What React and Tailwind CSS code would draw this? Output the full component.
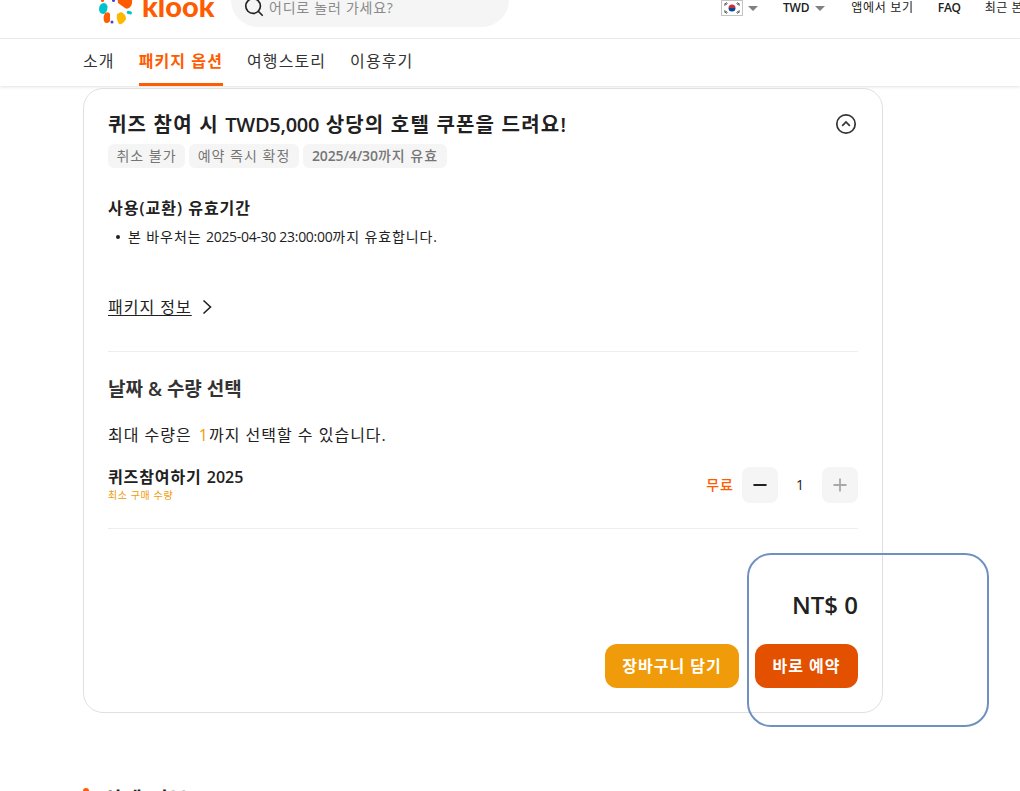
import React from "react";
import { Search, Minus, Plus } from "lucide-react";

const tabs = ["소개", "패키지 옵션", "여행스토리", "이용후기"];

// Klook pinwheel mark
const KlookMark = () => (
  <svg width="34" height="25" viewBox="0 0 34 25" className="shrink-0">
    <path d="M21 -8 L30 -8 Q35 0 32 6 Q29 10 26 8 L19 3 Q18 -2 21 -8 Z" fill="#ff5b00" />
    <path d="M3 3.5 Q7 2 8.5 6 Q9 11 5 14 Q0 14 0 9 Q0 5 3 3.5 Z" fill="#00c4cc" />
    <path d="M6 13 Q10 11 11 14 L11 21 Q9 24 6 22.5 Q3 19 6 13 Z" fill="#ff5b00" />
    <path d="M18 14 L22 12 Q27 14 27 19 Q24 25 20 24 Q17 19 18 14 Z" fill="#ffb800" />
    <rect x="28" y="11" width="5" height="3" rx="1" fill="#00c4cc" transform="rotate(15 30 12)" />
    <circle cx="13" cy="22" r="1.5" fill="#4b3fd6" />
    <circle cx="14.5" cy="0.5" r="1.5" fill="#4b3fd6" />
    <circle cx="3.5" cy="0.5" r="1.5" fill="#ff5b00" />
  </svg>
);

const KoreaFlag = () => (
  <svg width="22" height="16" viewBox="0 0 22 16" className="shrink-0">
    <rect x="0.5" y="0.5" width="21" height="15" fill="#fff" stroke="#c4c4c4" />
    <path d="M7.5 8 A3.5 3.5 0 0 1 14.5 8 Z" fill="#cd2e3a" />
    <path d="M7.5 8 A3.5 3.5 0 0 0 14.5 8 Z" fill="#0047a0" />
    <path d="M3 4.5 L6 2.5 M3.5 5.5 L6.5 3.5 M16 2.5 L19 4.5 M15.5 3.5 L18.5 5.5 M3 11.5 L6 13.5 M3.5 10.5 L6.5 12.5 M16 13.5 L19 11.5 M15.5 12.5 L18.5 10.5" stroke="#333" strokeWidth="0.8" />
  </svg>
);

const Caret = () => (
  <span className="block mt-[6px] w-0 h-0 border-x-[5px] border-x-transparent border-t-[5px] border-t-[#808080]" />
);

export default function App() {
  return (
    <div className="relative h-[791px] overflow-hidden bg-white text-[#212121] font-['Open_Sans','Noto_Sans_CJK_KR',sans-serif]">
      <header className="h-[39px] overflow-hidden border-b border-[#eeeeee] flex">
        <div className="ml-[99px] flex items-start gap-[9px] h-6 w-[123px] shrink-0">
          <KlookMark />
          <span className="-mt-[5px] font-['Lato',sans-serif] font-black text-[29px] leading-[22px] text-[#ff5b00]">klook</span>
        </div>
        <div className="ml-[9px] -mt-[27px] w-[278px] h-[54px] shrink-0 rounded-[27px] bg-[#f5f5f5] flex items-end pb-[10px] pl-[12px] gap-[4px]">
          <Search size={22} strokeWidth={1.8} className="text-[#212121] -mb-[1px]" />
          <span className="text-sm leading-[18px] tracking-[0.75px] text-[#8a8a8a]">어디로 놀러 가세요?</span>
        </div>
        <div className="ml-[212px] flex items-start gap-[5px]">
          <KoreaFlag />
          <Caret />
        </div>
        <div className="ml-[25px] flex items-start text-xs leading-[15px] font-semibold tracking-[-0.2px] gap-[6px]">
          <span>TWD</span>
          <Caret />
        </div>
        <span className="ml-[26px] text-xs leading-[15px] tracking-[0.7px] whitespace-nowrap">앱에서 보기</span>
        <span className="ml-[24px] text-xs leading-[15px] font-semibold tracking-[-0.3px]">FAQ</span>
        <span className="ml-[24px] text-xs leading-[15px] tracking-[0.5px] whitespace-nowrap">최근 본 상품</span>
      </header>

      <nav className="h-[47px] flex items-stretch pl-[83px] gap-6 shadow-[0_1px_3px_rgba(0,0,0,0.12)] text-base tracking-[1.1px]">
        {tabs.map((t, i) => (
          <span
            key={t}
            className={
              i === 1
                ? "flex items-center h-[47px] border-b-[3px] border-[#ff5b00] text-[#ff5b00] font-semibold"
                : "flex items-center h-[47px] pb-[3px] text-[#333333]"
            }
          >
            {t}
          </span>
        ))}
      </nav>

      <main className="ml-[83px] mt-[2px] w-[800px] h-[625px] rounded-[20px] border border-[#e0e0e0] px-6 pt-[22px] flex flex-col">
        <div className="flex justify-between items-start">
          <h2 className="text-xl leading-[28px] font-semibold tracking-[1.2px]">
            퀴즈 참여 시 <span className="tracking-[-0.25px]">TWD5,000</span> 상당의 호텔 쿠폰을 드려요!
          </h2>
          <svg width="22" height="22" viewBox="0 0 22 22" className="mt-[2px] mr-[1px] text-[#333333]" fill="none" stroke="currentColor">
            <circle cx="11" cy="11" r="9.2" strokeWidth="1.7" />
            <path d="M7.2 12.8 L11 9 L14.8 12.8" strokeWidth="1.7" />
          </svg>
        </div>

        <div className="flex gap-1 mt-[5px] text-sm leading-6 tracking-[1px] text-[#757575] text-center whitespace-nowrap">
          <span className="w-[77px] h-6 rounded-md bg-[#f5f5f5]">취소 불가</span>
          <span className="w-[110px] h-6 rounded-md bg-[#f5f5f5]">예약 즉시 확정</span>
          <span className="w-[144px] h-6 rounded-md bg-[#f5f5f5] font-medium">
            <span className="font-semibold tracking-[-0.1px]">2025/4/30</span>까지 유효
          </span>
        </div>

        <h3 className="mt-[28px] text-base leading-6 font-semibold tracking-[1px]">사용(교환) 유효기간</h3>
        <div className="mt-[8px] flex items-center text-sm leading-[18px] tracking-[0.9px] whitespace-pre">
          <span className="ml-[8px] mr-[8px] w-1 h-1 rounded-full bg-[#212121]" />
          본 바우처는 <span className="tracking-[-0.3px]">2025-04-30 23:00:00</span>까지 유효합니다.
        </div>

        <div className="mt-[49px] flex items-center gap-[10px] text-base leading-6 tracking-[1px]">
          <span className="underline underline-offset-2">패키지 정보</span>
          <svg width="11" height="16" viewBox="0 0 11 16" fill="none" stroke="#212121" strokeWidth="1.6">
            <path d="M1.5 1.5 L8.5 8 L1.5 14.5" />
          </svg>
        </div>

        <div className="mt-[32px] border-t border-[#eeeeee]" />

        <h3 className="mt-[23px] text-[19px] leading-[28px] font-semibold text-[#333333]">날짜 &amp; 수량 선택</h3>

        <p className="mt-[20px] text-base leading-6 tracking-[1px]">
          최대 수량은<span className="ml-[7px] text-[#f09b0a]">1</span>까지 선택할 수 있습니다.
        </p>

        <div className="mt-[20px] flex justify-between items-center h-9">
          <div className="-mt-[2px]">
            <div className="text-base leading-[22px] font-semibold tracking-[0.9px]">
              퀴즈참여하기 <span className="tracking-normal">2025</span>
            </div>
            <div className="text-[10px] leading-[14px] tracking-[0.6px] text-[#f09b0a]">최소 구매 수량</div>
          </div>
          <div className="flex items-center">
            <span className="text-sm font-medium tracking-[1px] text-[#ff5b00]">무료</span>
            <button className="ml-[8px] w-9 h-9 rounded-lg bg-[#f5f5f5] flex items-center justify-center">
              <Minus size={20} strokeWidth={2.4} className="text-[#212121]" />
            </button>
            <span className="w-11 text-center text-sm">1</span>
            <button className="w-9 h-9 rounded-lg bg-[#f5f5f5] flex items-center justify-center">
              <Plus size={20} strokeWidth={2.2} className="text-[#a8a8a8]" />
            </button>
          </div>
        </div>

        <div className="mt-[25px] border-t border-[#eeeeee]" />

        <div className="mt-[58px] text-right text-[24px] leading-9 font-semibold">NT$ 0</div>

        <div className="mt-[21px] flex justify-end gap-4 text-base font-semibold tracking-[1px] text-white">
          <button className="w-[134px] h-11 rounded-xl bg-[#f09b0a]">장바구니 담기</button>
          <button className="w-[103px] h-11 rounded-xl bg-[#e35000]">바로 예약</button>
        </div>
      </main>

      <div className="ml-[83px] mt-[75px] flex items-start gap-[15px]">
        <span className="w-[6px] h-6 rounded-full bg-[#ff5b00]" />
        <span className="-mt-[2px] text-xl leading-[28px] font-semibold tracking-[1.2px]">상세 정보</span>
      </div>

      {/* annotation drawn over the screenshot */}
      <div className="absolute left-[747px] top-[553px] w-[242px] h-[174px] rounded-[24px] border-2 border-[#7091bf]" />
    </div>
  );
}
